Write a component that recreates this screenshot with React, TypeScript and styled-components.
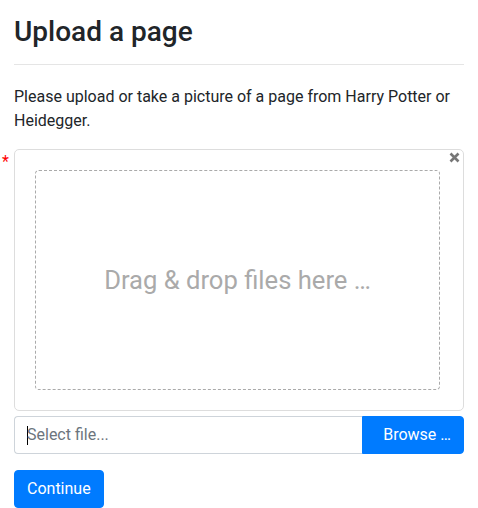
import React from "react";
import styled, { createGlobalStyle } from "styled-components";

const Global = createGlobalStyle`
  html, body { margin: 0; padding: 0; background: #fff; }
  body {
    font-family: Roboto, "Liberation Sans", sans-serif;
    font-size: 16px;
    line-height: 1.5;
    color: #212529;
  }
  * { box-sizing: border-box; }
`;

const Page = styled.div`
  padding: 15px 14px 0;
  display: flex;
  flex-direction: column;
`;

const Title = styled.h3`
  margin: 0 0 15px;
  font-size: 28px;
  font-weight: 500;
  line-height: 1.2;
  color: #212529;
`;

const Rule = styled.hr`
  margin: 0 0 20px;
  border: 0;
  border-top: 1px solid rgba(0, 0, 0, 0.1);
`;

const Intro = styled.p`
  margin: 0 0 16px;
`;

const Field = styled.div`
  position: relative;
`;

const Required = styled.span`
  position: absolute;
  left: -12px;
  top: 5px;
  color: #ff0000;
  font-size: 16px;
  line-height: 1;
`;

const Preview = styled.div`
  position: relative;
  border: 1px solid #ddd;
  border-radius: 5px;
  padding: 8px;
  margin-bottom: 5px;
`;

const Remove = styled.span`
  position: absolute;
  top: 2px;
  right: 3px;
  width: 11px;
  height: 11px;
  display: flex;
`;

const DropZone = styled.div`
  border: 1px dashed #aaa;
  border-radius: 4px;
  margin: 12px 15px 12px 12px;
  padding: 5px;
  text-align: center;
`;

const DropTitle = styled.div`
  color: #aaa;
  font-size: 25.6px;
  line-height: 38.4px;
  padding: 85px 10px;
`;

const InputGroup = styled.div`
  display: flex;
  height: 38px;
`;

const Caption = styled.div`
  flex: 1;
  display: flex;
  align-items: center;
  border: 1px solid #ced4da;
  border-right: 0;
  border-radius: 4px 0 0 4px;
  padding: 0 12px;
  color: #6c757d;
`;

const Caret = styled.span`
  display: inline-block;
  width: 1px;
  height: 19px;
  background: #000;
  margin-right: -1px;
`;

const Button = styled.button<{ $group?: boolean }>`
  font-family: inherit;
  font-size: 16px;
  line-height: 24px;
  color: #fff;
  background: #007bff;
  border: 1px solid #007bff;
  border-radius: ${(p) => (p.$group ? "0 4px 4px 0" : "4px")};
  padding: ${(p) => (p.$group ? "6px 12px 6px 20px" : "6px 12px")};
  height: 38px;
  cursor: pointer;
`;

const Actions = styled.div`
  margin-top: 16px;
  display: flex;
`;

export default function App() {
  return (
    <>
      <Global />
      <Page>
        <Title>Upload a page</Title>
        <Rule />
        <Intro>
          Please upload or take a picture of a page from Harry Potter or
          Heidegger.
        </Intro>
        <Field>
          <Required>*</Required>
          <Preview>
            <Remove>
              <svg width="11" height="11" viewBox="0 0 11 11">
                <path
                  d="M1.5 1.5 L9.5 9.5 M9.5 1.5 L1.5 9.5"
                  stroke="#777"
                  strokeWidth="2.6"
                  strokeLinecap="butt"
                />
              </svg>
            </Remove>
            <DropZone>
              <DropTitle>Drag &amp; drop files here …</DropTitle>
            </DropZone>
          </Preview>
          <InputGroup>
            <Caption>
              <Caret />
              Select file...
            </Caption>
            <Button $group>Browse …</Button>
          </InputGroup>
        </Field>
        <Actions>
          <Button>Continue</Button>
        </Actions>
      </Page>
    </>
  );
}
